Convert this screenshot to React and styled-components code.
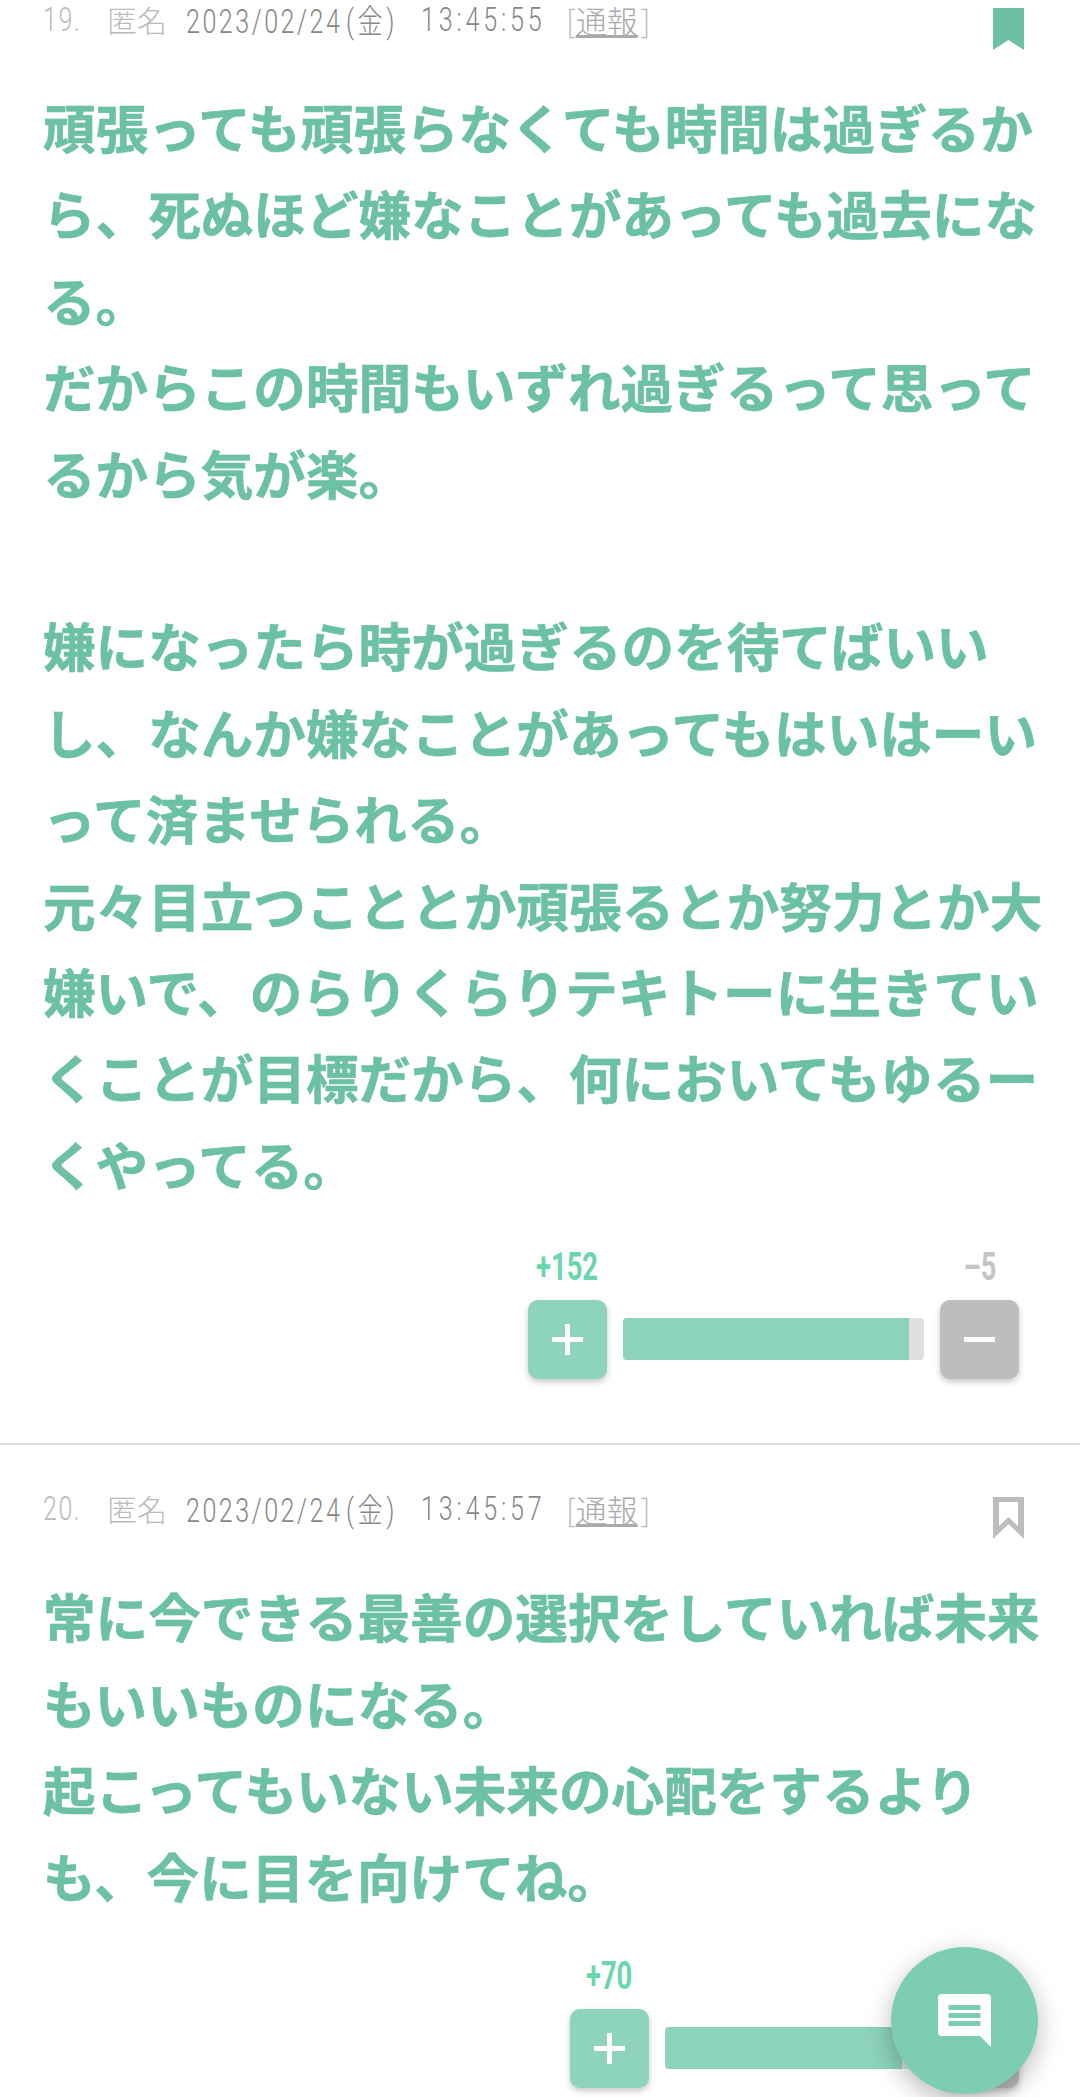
import React from "react";
import styled, { createGlobalStyle } from "styled-components";

const GlobalStyle = createGlobalStyle`
  html, body {
    margin: 0;
    padding: 0;
    background: #fff;
    height: 2097px;
    overflow: hidden;
  }
`;

const CommentList = styled.div`
  /* page is scrolled a bit, first comment starts above the fold */
  margin-top: -44px;
  font-family: "Noto Sans CJK JP", sans-serif;
`;

const Comment = styled.article`
  padding: 44px 30px 64px 43px;
  border-bottom: 2px solid #e0e0e0;
`;

const Meta = styled.div`
  display: flex;
  align-items: center;
  box-sizing: border-box;
  height: 44px;
  padding-bottom: 6px;
  font-family: Roboto, "Noto Sans CJK JP", sans-serif;
  font-size: 33px;
  font-weight: 300;
  white-space: nowrap;
`;

/* the digits in the header are a condensed face, none installed so squeeze it */
const Squeezed = styled.span`
  display: inline-block;
  flex: none;
  width: ${(p) => p.$width}px;
  letter-spacing: ${(p) => p.$spacing}px;
  color: ${(p) => p.$color || "#888"};
  transform: scaleX(0.76);
  transform-origin: left center;
`;

const Weekday = styled.span`
  margin-left: 5px;
  letter-spacing: 4.6px;
`;

const Name = styled.span`
  flex: none;
  width: 79px;
  color: #bbb;
  font-family: "Noto Sans CJK JP", sans-serif;
  font-size: 30px;
  font-weight: 300;
`;

const Report = styled.span`
  display: flex;
  align-items: center;
  margin-left: 22px;
  color: #bbb;
  font-family: "Noto Sans CJK JP", sans-serif;
  font-size: 31px;
  font-weight: 300;
  a {
    color: #aaa;
    text-decoration: underline;
    margin-right: 3px;
  }
`;

const Mark = styled.svg`
  margin-left: auto;
  margin-right: 26px;
  margin-top: 20px;
  width: 31px;
  height: 42px;
  flex: none;
`;

const Body = styled.div`
  margin-top: 39px;
  color: #6bc1a2;
  font-size: 52.6px;
  line-height: 86.4px;
  font-weight: 700;
  -webkit-text-stroke: 0.6px #6bc1a2;
`;

const Votes = styled.div`
  display: flex;
  justify-content: flex-end;
  align-items: flex-end;
  gap: 16px;
  margin-top: ${(p) => p.$top}px;
  padding-right: 31px;
`;

const VoteSide = styled.div`
  display: flex;
  flex-direction: column;
  align-items: center;
  width: 79px;
`;

const Count = styled.div`
  font-family: Roboto, sans-serif;
  font-size: 38px;
  line-height: 46px;
  font-weight: 700;
  margin-bottom: 10px;
  white-space: nowrap;
  transform: scaleX(0.72);
  color: ${(p) => (p.$minus ? "#c4c4c4" : "#6bd6ae")};
`;

const VoteButton = styled.button`
  display: flex;
  align-items: center;
  justify-content: center;
  width: 79px;
  height: 79px;
  padding: 0;
  border: 0;
  border-radius: 10px;
  background: ${(p) => (p.$minus ? "#bdbdbd" : "#8dd3bd")};
  box-shadow: 0 3px 6px rgba(0, 0, 0, 0.22);
`;

const Bar = styled.div`
  width: ${(p) => p.$width}px;
  height: 42px;
  margin-bottom: 19px;
  border-radius: 4px;
  background: #e0e0e0;
  overflow: hidden;
`;

const BarFill = styled.div`
  height: 100%;
  background: #8dd3bd;
`;

const Fab = styled.button`
  position: fixed;
  left: 891px;
  top: 1947px;
  display: flex;
  align-items: center;
  justify-content: center;
  width: 147px;
  height: 147px;
  padding: 0;
  border: 0;
  border-radius: 50%;
  background: #7dcdb4;
  box-shadow: 0 8px 26px rgba(0, 0, 0, 0.28);
`;

const FabIcon = styled.svg`
  width: 53px;
  height: 53px;
  display: block;
`;

const PlusIcon = () => (
  <svg width="31" height="31" viewBox="0 0 31 31">
    <rect x="0" y="13" width="31" height="5" fill="#fff" />
    <rect x="13" y="0" width="5" height="31" fill="#fff" />
  </svg>
);

const MinusIcon = () => (
  <svg width="31" height="31" viewBox="0 0 31 31">
    <rect x="0" y="13" width="31" height="5" fill="#fff" />
  </svg>
);

const Bookmark = ({ on }) => (
  <Mark viewBox="0 0 31 42">
    {on ? (
      <path d="M0 0H31V42L15.5 32L0 42Z" fill="#6bc1a2" />
    ) : (
      <path
        d="M0 0H31V42L15.5 27L0 42ZM6 5V29L15.5 20L25 29V5Z"
        fill="#bdbdbd"
        fillRule="evenodd"
      />
    )}
  </Mark>
);

const comments = [
  {
    no: 19,
    date: "2023/02/24",
    time: "13:45:55",
    marked: true,
    text: (
      <>
        頑張っても頑張らなくても時間は過ぎるから、死ぬほど嫌なことがあっても過去になる。
        <br />
        だからこの時間もいずれ過ぎるって思ってるから気が楽。
        <br />
        <br />
        嫌になったら時が過ぎるのを待てばいいし、なんか嫌なことがあってもはいはーいって済ませられる。
        <br />
        元々目立つこととか頑張るとか努力とか大嫌いで、のらりくらりテキトーに生きていくことが目標だから、何においてもゆるーくやってる。
      </>
    ),
    plus: 152,
    minus: 5,
    barWidth: 301,
    ratio: 95,
    voteTop: 38,
  },
  {
    no: 20,
    date: "2023/02/24",
    time: "13:45:57",
    marked: false,
    text: (
      <>
        常に今できる最善の選択をしていれば未来もいいものになる。
        <br />
        起こってもいない未来の心配をするよりも、今に目を向けてね。
      </>
    ),
    plus: 70,
    minus: 6,
    barWidth: 259,
    ratio: 91.5,
    voteTop: 35,
  },
];

const App = () => {
  return (
    <>
      <GlobalStyle />
      <CommentList>
        {comments.map((c) => (
          <Comment key={c.no}>
            <Meta>
              <Squeezed $width={64} $spacing={2} $color="#bbb">
                {c.no}.
              </Squeezed>
              <Name>匿名</Name>
              <Squeezed $width={235} $spacing={3.3}>
                {c.date}
                <Weekday>(金)</Weekday>
              </Squeezed>
              <Squeezed $width={123} $spacing={5}>
                {c.time}
              </Squeezed>
              <Report>
                [<a href="#report">通報</a>]
              </Report>
              <Bookmark on={c.marked} />
            </Meta>
            <Body>{c.text}</Body>
            <Votes $top={c.voteTop}>
              <VoteSide>
                <Count>+{c.plus}</Count>
                <VoteButton>
                  <PlusIcon />
                </VoteButton>
              </VoteSide>
              <Bar $width={c.barWidth}>
                <BarFill style={{ width: `${c.ratio}%` }} />
              </Bar>
              <VoteSide>
                <Count $minus>–{c.minus}</Count>
                <VoteButton $minus>
                  <MinusIcon />
                </VoteButton>
              </VoteSide>
            </Votes>
          </Comment>
        ))}
      </CommentList>
      <Fab>
        <FabIcon viewBox="0 0 53 53">
          <path
            d="M4 0H49A4 4 0 0 1 53 4V53L42 42H4A4 4 0 0 1 0 38V4A4 4 0 0 1 4 0Z"
            fill="#fff"
          />
          <rect x="10.5" y="11" width="32" height="5" fill="#7dcdb4" />
          <rect x="10.5" y="19" width="32" height="5" fill="#7dcdb4" />
          <rect x="10.5" y="27" width="32" height="5" fill="#7dcdb4" />
        </FabIcon>
      </Fab>
    </>
  );
};

export default App;
